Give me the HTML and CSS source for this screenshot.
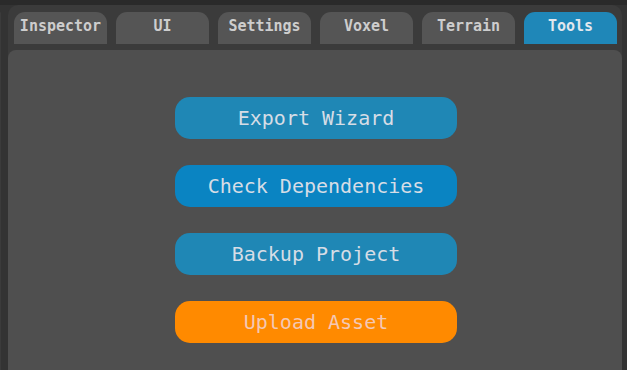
FILE: index.html
```html
<!DOCTYPE html>
<html lang="en">
<head>
    <meta charset="UTF-8">
    <meta name="viewport" content="width=device-width, initial-scale=1.0">
    <title>Tools</title>
    <link rel="stylesheet" href="styles.css">
</head>
<body>
    <div class="stub"></div>

    <div class="panel">
        <div class="tabs">
            <div class="tab">Inspector</div>
            <div class="tab">UI</div>
            <div class="tab">Settings</div>
            <div class="tab">Voxel</div>
            <div class="tab">Terrain</div>
            <div class="tab active">Tools</div>
        </div>

        <div class="content">
            <button class="btn">Export Wizard</button>
            <button class="btn focus">Check Dependencies</button>
            <button class="btn">Backup Project</button>
            <button class="btn warn">Upload Asset</button>
        </div>
    </div>
</body>
</html>
```

FILE: styles.css
```css
html, body {
    height: 100%;
}
body {
    margin: 0;
    background: #333333;
    display: flex;
    gap: 7px;
    font-family: 'DejaVu Sans Mono', 'Liberation Mono', monospace;
    overflow: hidden;
    box-shadow: inset 0 5px 0 #2a2a2a;
}

/* bord du panneau voisin */
.stub {
    width: 3px;
    margin-top: 12px;
    background: #3b3b3b;
    border-top-right-radius: 6px;
}

.panel {
    flex: 1;
    margin-top: 5px;
    margin-right: 5px;
    background: #3b3b3b;
    border-radius: 10px 10px 0 0;
    display: flex;
    flex-direction: column;
}

.tabs {
    display: flex;
    gap: 9px;
    padding: 7px 5px 6px 5px;
}
.tab {
    width: 93px;
    height: 32px;
    box-sizing: border-box;
    padding-bottom: 4px;
    display: flex;
    align-items: center;
    justify-content: center;
    background: #555555;
    color: #cdcdcd;
    font-size: 15px;
    font-weight: bold;
    border-radius: 11px 11px 0 0;
}
.tab:first-child {
    margin-left: 1px;
}
.tab.active {
    background: #1f87b8;
    color: #e2e8ee;
}

.content {
    flex: 1;
    background: #4f4f4f;
    border-radius: 8px 8px 0 0;
    display: flex;
    flex-direction: column;
    align-items: center;
    gap: 26px;
    padding-top: 47px;
    padding-left: 2px;
}

.btn {
    width: 282px;
    height: 42px;
    border: none;
    border-radius: 15px;
    background: #1f87b5;
    color: #d6dde6;
    font-family: inherit;
    font-size: 20px;
    flex-shrink: 0;
}
.btn.focus {
    background: #0a84c2;
}
.btn.warn {
    background: #ff8a00;
    color: #f4c8b4;
}
```
